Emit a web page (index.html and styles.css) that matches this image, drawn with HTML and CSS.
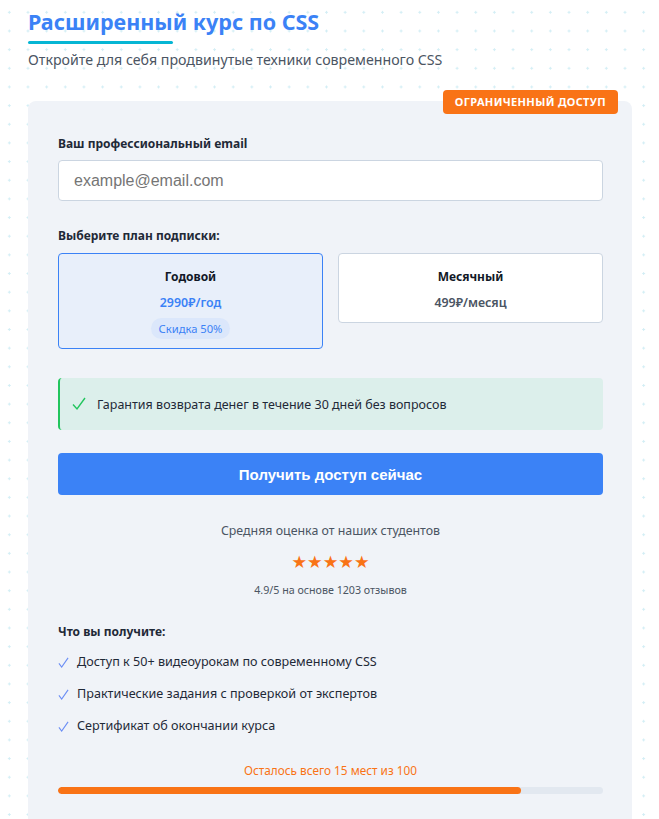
FILE: index.html
```html
<!DOCTYPE html>
<html lang="ru">
<head>
<meta charset="utf-8">
<title>Расширенный курс по CSS</title>
<link rel="stylesheet" href="styles.css">
</head>
<body>
<div class="page">
  <header class="hero">
    <h1 class="title">Расширенный курс по CSS</h1>
    <div class="title-bar"></div>
    <p class="subtitle">Откройте для себя продвинутые техники современного CSS</p>
  </header>

  <section class="card">
    <span class="badge">Ограниченный доступ</span>

    <label class="label" for="email">Ваш профессиональный email</label>
    <input class="input" id="email" type="email" placeholder="example@email.com">

    <div class="label plan-label">Выберите план подписки:</div>
    <div class="plans">
      <div class="plan plan-active">
        <div class="plan-name">Годовой</div>
        <div class="plan-price">2990₽/год</div>
        <span class="plan-tag">Скидка 50%</span>
      </div>
      <div class="plan">
        <div class="plan-name">Месячный</div>
        <div class="plan-price">499₽/месяц</div>
      </div>
    </div>

    <div class="guarantee">
      <svg class="g-check" viewBox="0 0 14 14" width="14" height="14"><path d="M1 7.5 L5 12 L13 1" fill="none" stroke="#22c55e" stroke-width="1.4"/></svg>
      <span>Гарантия возврата денег в течение 30 дней без вопросов</span>
    </div>

    <button class="cta" type="button">Получить доступ сейчас</button>

    <div class="rating">
      <div class="rating-title">Средняя оценка от наших студентов</div>
      <div class="stars">★★★★★</div>
      <div class="rating-note">4.9/5 на основе 1203 отзывов</div>
    </div>

    <div class="label benefits-label">Что вы получите:</div>
    <ul class="benefits">
      <li><svg class="b-check" viewBox="0 0 12 12" width="11" height="11"><path d="M1 7 L4 11 L11 1" fill="none" stroke="#6b8ef5" stroke-width="1.2"/></svg>Доступ к 50+ видеоурокам по современному CSS</li>
      <li><svg class="b-check" viewBox="0 0 12 12" width="11" height="11"><path d="M1 7 L4 11 L11 1" fill="none" stroke="#6b8ef5" stroke-width="1.2"/></svg>Практические задания с проверкой от экспертов</li>
      <li><svg class="b-check" viewBox="0 0 12 12" width="11" height="11"><path d="M1 7 L4 11 L11 1" fill="none" stroke="#6b8ef5" stroke-width="1.2"/></svg>Сертификат об окончании курса</li>
    </ul>

    <div class="seats">
      <div class="seats-text">Осталось всего 15 мест из 100</div>
      <div class="progress"><div class="progress-fill" style="width:85%"></div></div>
    </div>
  </section>
</div>
</body>
</html>
```

FILE: styles.css
```css
* { box-sizing: border-box; }

html, body { margin: 0; padding: 0; }

body {
  font-family: "Noto Sans", "Open Sans", sans-serif;
  color: #1f2937;
  background-color: #ffffff;
  background-image: radial-gradient(circle, #d3eef5 1px, transparent 1.3px);
  background-size: 18.67px 18.67px;
  background-position: 0 3px;
}

.page {
  padding: 6px 27px 0 28px;
}

.title {
  margin: 0;
  font-size: 21.5px;
  line-height: 32px;
  font-weight: 700;
  color: #3b82f6;
}

.title-bar {
  width: 145px;
  height: 3px;
  background: #06b6d4;
  margin-top: 3px;
  border-radius: 2px;
}

.subtitle {
  margin: 5px 0 0;
  font-size: 14.2px;
  line-height: 22px;
  color: #4b5563;
}

.card {
  position: relative;
  margin-top: 30px;
  background: #f0f3f8;
  border-radius: 8px;
  padding: 34px 29px 24px 30px;
  min-height: 740px;
}

.badge {
  position: absolute;
  top: -11px;
  right: 14px;
  background: #f97316;
  color: #fff;
  font-size: 11px;
  font-weight: 700;
  letter-spacing: 0.35px;
  text-transform: uppercase;
  line-height: 24px;
  padding: 0 12px;
  border-radius: 4px;
}

.label {
  display: block;
  font-size: 12px;
  font-weight: 700;
  line-height: 18px;
  color: #1f2937;
}

.input {
  display: block;
  width: 100%;
  height: 41px;
  margin-top: 7px;
  border: 1px solid #cbd5e1;
  border-radius: 4px;
  background: #fff;
  padding: 0 15px;
  font-family: "Liberation Sans", Arial, sans-serif;
  font-size: 16px;
  color: #1f2937;
}
.input::placeholder { color: #757575; }

.plan-label { margin-top: 26px; }

.plans {
  display: grid;
  grid-template-columns: 1fr 1fr;
  gap: 15px;
  margin-top: 8px;
  align-items: start;
}

.plan {
  background: #fff;
  border: 1px solid #cbd5e1;
  border-radius: 4px;
  padding: 14px 10px 10px;
  text-align: center;
}

.plan-active {
  background: #e8effa;
  border-color: #3b82f6;
  padding-bottom: 9px;
}

.plan-name {
  font-size: 12px;
  font-weight: 700;
  line-height: 18px;
  color: #111827;
}

.plan-price {
  margin-top: 8px;
  font-size: 12.4px;
  font-weight: 600;
  line-height: 18px;
  color: #4b5563;
}
.plan-active .plan-price { color: #3b82f6; }

.plan-tag {
  display: inline-block;
  margin-top: 6px;
  background: #dbe7fb;
  color: #3b82f6;
  font-size: 11.2px;
  line-height: 21px;
  padding: 0 8px;
  border-radius: 11px;
}

.guarantee {
  display: flex;
  align-items: center;
  gap: 11px;
  margin-top: 29px;
  height: 52px;
  background: #dcefeb;
  border-left: 2px solid #22c55e;
  border-radius: 4px;
  padding-left: 12px;
  font-size: 12.5px;
  color: #1f2937;
}
.g-check { flex: none; }

.cta {
  display: block;
  width: 100%;
  height: 42px;
  margin-top: 23px;
  border: 0;
  border-radius: 4px;
  background: #3b82f6;
  color: #fff;
  font-family: "Liberation Sans", Arial, sans-serif;
  font-size: 15px;
  font-weight: 700;
}

.rating {
  text-align: center;
  margin-top: 27px;
}
.rating-title {
  font-size: 12.4px;
  line-height: 18px;
  color: #4b5563;
}
.stars {
  margin-top: 11px;
  font-family: "DejaVu Sans", sans-serif;
  font-size: 17.4px;
  line-height: 22px;
  color: #f97316;
}
.rating-note {
  margin-top: 9px;
  font-size: 10.7px;
  line-height: 16px;
  color: #4b5563;
}

.benefits-label { margin-top: 25px; }

.benefits {
  list-style: none;
  margin: 5px 0 0;
  padding: 0;
}
.benefits li {
  display: flex;
  align-items: center;
  gap: 8px;
  font-size: 12.6px;
  line-height: 18px;
  padding: 7px 0 7px;
  color: #1f2937;
}
.b-check { flex: none; }

.seats {
  margin-top: 19px;
  text-align: center;
}
.seats-text {
  font-size: 11.8px;
  line-height: 18px;
  color: #f97316;
}
.progress {
  margin-top: 8px;
  height: 7px;
  background: #e2e8f0;
  border-radius: 4px;
  overflow: hidden;
}
.progress-fill {
  height: 100%;
  background: #f97316;
  border-radius: 4px;
}
```
